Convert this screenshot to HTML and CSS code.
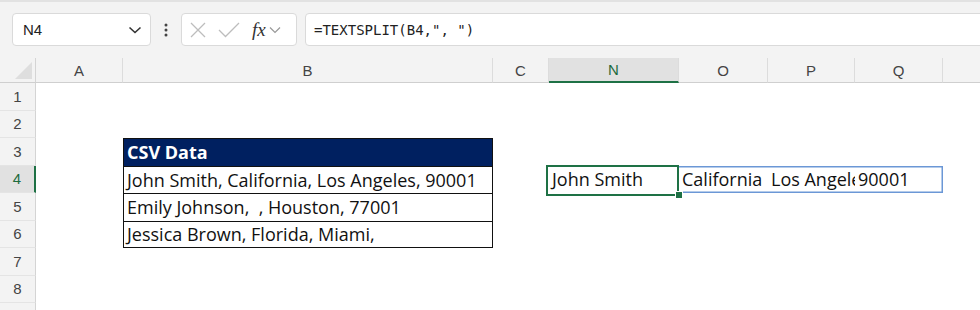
FILE: index.html
```html
<!DOCTYPE html>
<html lang="en">
<head>
    <meta charset="UTF-8">
    <meta name="viewport" content="width=device-width, initial-scale=1.0">
    <title>TEXTSPLIT</title>
    <link rel="stylesheet" href="styles.css">
</head>
<body>
    <div class="toolbar">
        <div class="name-box">
            <span>N4</span>
            <svg width="14" height="8" viewBox="0 0 14 8"><path d="M1.5 1.5 L7 6.5 L12.5 1.5" fill="none" stroke="#333" stroke-width="1.6"/></svg>
        </div>
        <div class="dots">
            <svg width="4" height="14" viewBox="0 0 4 14"><circle cx="2" cy="2" r="1.5" fill="#444"/><circle cx="2" cy="7" r="1.5" fill="#444"/><circle cx="2" cy="12" r="1.5" fill="#444"/></svg>
        </div>
        <div class="fx-box">
            <svg width="18" height="18" viewBox="0 0 18 18"><path d="M2 2 L16 16 M16 2 L2 16" stroke="#bdbdbd" stroke-width="1.3"/></svg>
            <svg width="22" height="16" viewBox="0 0 22 16"><path d="M1 8 L7.5 14.5 L21 1" fill="none" stroke="#bdbdbd" stroke-width="1.3"/></svg>
            <span class="fx">fx</span>
            <svg width="12" height="8" viewBox="0 0 12 8"><path d="M1 1.5 L6 6.5 L11 1.5" fill="none" stroke="#999" stroke-width="1.2"/></svg>
        </div>
        <div class="formula">=TEXTSPLIT(B4,", ")</div>
    </div>

    <div class="sheet">
        <div class="corner"><div class="tri"></div></div>
        <div class="col-head">A</div>
        <div class="col-head">B</div>
        <div class="col-head">C</div>
        <div class="col-head active">N</div>
        <div class="col-head">O</div>
        <div class="col-head">P</div>
        <div class="col-head">Q</div>
        <div class="col-head last"></div>

        <div class="row-head">1</div><div class="row-fill"></div>
        <div class="row-head">2</div><div class="row-fill"></div>

        <div class="row-head">3</div>
        <div class="cell"></div>
        <div class="cell tbl head">CSV Data</div>
        <div class="row-rest"></div>

        <div class="row-head active">4</div>
        <div class="cell"></div>
        <div class="cell tbl">John Smith, California, Los Angeles, 90001</div>
        <div class="cell"></div>
        <div class="cell sel">John Smith<div class="handle"></div></div>
        <div class="cell spill">California</div>
        <div class="cell spill">Los Angeles</div>
        <div class="cell spill end">90001</div>
        <div class="cell"></div>

        <div class="row-head">5</div>
        <div class="cell"></div>
        <div class="cell tbl">Emily Johnson,&nbsp; , Houston, 77001</div>
        <div class="row-rest"></div>

        <div class="row-head">6</div>
        <div class="cell"></div>
        <div class="cell tbl bottom">Jessica Brown, Florida, Miami,</div>
        <div class="row-rest"></div>

        <div class="row-head">7</div><div class="row-fill"></div>
        <div class="row-head">8</div><div class="row-fill"></div>
        <div class="row-head"></div><div class="row-fill"></div>
    </div>
</body>
</html>
```

FILE: styles.css
```css
body {
    margin: 0;
    width: 980px;
    height: 310px;
    overflow: hidden;
    background-color: #fff;
    font-family: "Liberation Sans", Arial, sans-serif;
}
.toolbar {
    height: 58px;
    box-sizing: border-box;
    padding: 13px 0 0 12px;
    display: flex;
    align-items: flex-start;
    background-color: #f3f3f3;
    border-top: 2px solid #e2e2e2;
}
.name-box, .fx-box, .formula {
    height: 33px;
    box-sizing: border-box;
    background-color: #fff;
    border: 1px solid #dadada;
    border-radius: 4px;
    display: flex;
    align-items: center;
    margin-top: -2px;
}
.name-box {
    width: 139px;
    padding: 0 8px 0 10px;
    justify-content: space-between;
    font-size: 15px;
    color: #222;
}
.dots {
    width: 30px;
    height: 33px;
    margin-top: -2px;
    display: flex;
    align-items: center;
    justify-content: center;
}
.fx-box {
    width: 116px;
    padding: 0 4px 0 7px;
    gap: 11px;
}
.fx-box .fx {
    font-family: "Liberation Serif", serif;
    font-style: italic;
    font-size: 19px;
    color: #333;
    margin-left: 1px;
    margin-right: -8px;
}
.formula {
    flex: 1;
    margin-left: 8px;
    margin-right: -6px;
    padding-left: 8px;
    font-family: "DejaVu Sans Mono", monospace;
    font-size: 14px;
    color: #222;
}
.sheet {
    display: grid;
    grid-template-columns: 36px 87px 370px 56px 130px 89px 87px 88px 1fr;
    grid-template-rows: 25px repeat(9, 27.5px);
}
.corner {
    background-color: #f3f3f3;
    border-right: 1px solid #d4d4d4;
    border-bottom: 1px solid #cfcfcf;
    position: relative;
}
.corner .tri {
    position: absolute;
    right: 3px;
    bottom: 3px;
    width: 0;
    height: 0;
    border-left: 17px solid transparent;
    border-bottom: 17px solid #dedede;
}
.col-head {
    background-color: #f3f3f3;
    border-right: 1px solid #dcdcdc;
    border-bottom: 1px solid #cfcfcf;
    display: flex;
    align-items: center;
    justify-content: center;
    font-size: 15px;
    color: #444;
}
.col-head.active {
    background-color: #e1e1e1;
    color: #1e6b3e;
    border-bottom: 2px solid #1e7145;
}
.col-head.last {
    border-right: none;
}
.row-head {
    background-color: #f3f3f3;
    border-right: 1px solid #d4d4d4;
    border-bottom: 1px solid #e4e4e4;
    display: flex;
    align-items: center;
    justify-content: center;
    font-size: 15px;
    color: #444;
}
.row-head.active {
    background-color: #e1e1e1;
    color: #1e6b3e;
    border-right: 2px solid #1e7145;
}
.row-fill {
    grid-column: 2 / 10;
}
.row-rest {
    grid-column: 4 / 10;
}
.cell {
    font-family: "Open Sans", "Liberation Sans", sans-serif;
    font-size: 18px;
    color: #111;
    padding-left: 3px;
    display: flex;
    align-items: center;
    white-space: nowrap;
    overflow: hidden;
}
.cell.tbl {
    border: 1px solid #111;
    border-bottom: none;
}
.cell.tbl.bottom {
    border-bottom: 1px solid #111;
}
.cell.head {
    background-color: #002060;
    color: #fff;
    font-weight: bold;
}
.cell.spill {
    box-shadow: inset 0 1.5px #6b97d6, inset 0 -1.5px #6b97d6;
}
.cell.spill.end {
    box-shadow: inset 0 1.5px #6b97d6, inset 0 -1.5px #6b97d6, inset -1.5px 0 #6b97d6;
}
.cell.sel {
    position: relative;
    overflow: visible;
    z-index: 1;
}
.cell.sel::after {
    content: "";
    position: absolute;
    left: -3px;
    right: 0;
    top: -1px;
    bottom: -3px;
    border: 2px solid #1e7145;
}
.handle {
    position: absolute;
    right: -4px;
    bottom: -6px;
    width: 6px;
    height: 6px;
    background-color: #1e7145;
    border: 1px solid #fff;
    z-index: 2;
}
```
